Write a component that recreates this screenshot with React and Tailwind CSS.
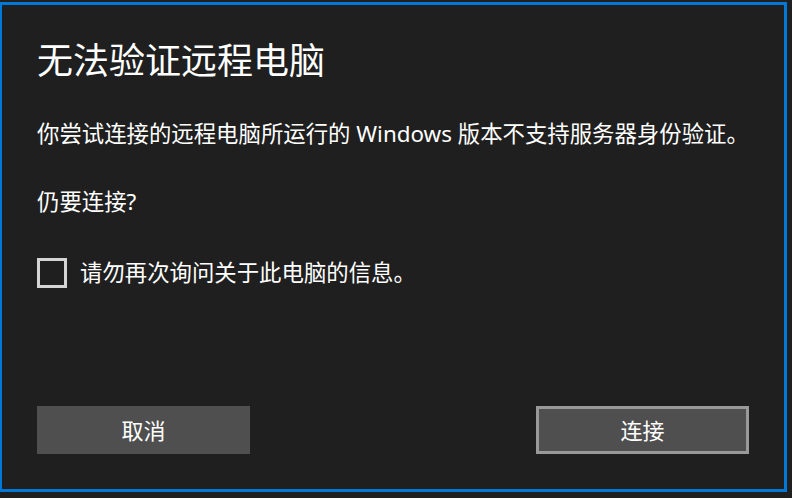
/**
 * App.jsx — Remote Desktop "cannot verify" dialog (dark theme)
 */
function App() {
  const font = {
    fontFamily: '"Noto Sans", "Noto Sans CJK SC", sans-serif',
  };

  return (
    <div className="w-[792px] h-[498px] bg-[#1f1f1f] pt-[2px]" style={font}>
      {/* Window frame with accent border */}
      <div className="w-[787px] h-[490px] border-t-[3px] border-l-2 border-r-[3px] border-b-[3px] border-[#0078d7] bg-[#1f1f1f] flex flex-col pl-[35px] pr-[35px] pt-[32px] pb-[35px] text-white">
        <h1 className="text-[36px] leading-[48px] font-normal">无法验证远程电脑</h1>

        <p className="mt-[33px] text-[22.4px] leading-[32px]">
          你尝试连接的远程电脑所运行的 Windows 版本不支持服务器身份验证。
        </p>

        <p className="mt-[36px] text-[22.4px] leading-[32px]">仍要连接?</p>

        {/* Checkbox row */}
        <label className="mt-[39px] flex items-center gap-[13px] cursor-pointer">
          <span className="w-[30px] h-[30px] border-[3px] border-[#d4d4d4] flex-shrink-0" />
          <span className="text-[22.4px] leading-[32px]">请勿再次询问关于此电脑的信息。</span>
        </label>

        {/* Action buttons */}
        <div className="mt-auto flex justify-between">
          <button className="w-[213px] h-[48px] bg-[#4f4f4f] text-white text-[22px]">取消</button>
          <button className="w-[213px] h-[48px] bg-[#4f4f4f] border-[3px] border-[#999999] text-white text-[22px]">
            连接
          </button>
        </div>
      </div>
    </div>
  );
}

export default App;
